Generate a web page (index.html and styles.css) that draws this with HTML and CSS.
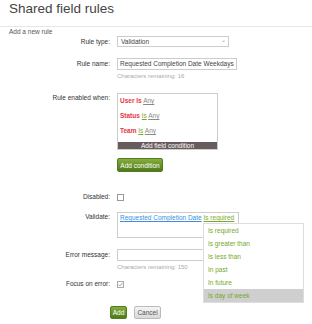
FILE: index.html
```html
<!DOCTYPE html>
<html lang="en">
<head>
  <meta charset="UTF-8">
  <title>Shared field rules</title>
  <link rel="stylesheet" href="styles.css">
</head>
<body>
  <div class="header"><h1>Shared field rules</h1></div>
  <div class="intro">Add a new rule</div>

  <div class="row r-type">
    <div class="label">Rule type:</div>
    <div class="select">Validation<span class="arrow">&#8964;</span></div>
  </div>

  <div class="row r-name">
    <div class="label">Rule name:</div>
    <div class="input">Requested Completion Date Weekdays</div>
  </div>
  <div class="hint">Characters remaining: 16</div>

  <div class="row r-when top">
    <div class="label">Rule enabled when:</div>
    <div class="cond-box">
      <div class="conds">
        <div class="cond"><b class="field">User Is</b> <u class="any">Any</u></div>
        <div class="cond"><b class="field">Status</b> <u class="op">Is</u> <u class="any">Any</u></div>
        <div class="cond"><b class="field">Team</b> <u class="op">Is</u> <u class="any">Any</u></div>
      </div>
      <div class="add-field">Add field condition</div>
    </div>
  </div>

  <div class="row r-addcond">
    <div class="label"></div>
    <button class="btn green">Add condition</button>
  </div>

  <div class="row r-disabled">
    <div class="label">Disabled:</div>
    <span class="check"></span>
  </div>

  <div class="row r-validate top">
    <div class="label">Validate:</div>
    <div class="validate-wrap">
      <div class="validate-box">
        <u class="link">Requested Completion Date</u> <u class="op">Is required</u>
      </div>
      <ul class="menu">
        <li>Is required</li>
        <li>Is greater than</li>
        <li>Is less than</li>
        <li>In past</li>
        <li>In future</li>
        <li class="active">Is day of week</li>
      </ul>
    </div>
  </div>

  <div class="row r-error">
    <div class="label">Error message:</div>
    <div class="input"></div>
  </div>
  <div class="hint">Characters remaining: 150</div>

  <div class="row r-focus">
    <div class="label">Focus on error:</div>
    <span class="check checked">
      <svg width="5" height="5" viewBox="0 0 5 5"><path d="M0.5 2.6 L1.9 4 L4.6 0.8" fill="none" stroke="#8a8a8a" stroke-width="0.8"/></svg>
    </span>
  </div>

  <div class="row r-buttons">
    <div class="label"></div>
    <button class="btn green">Add</button>
    <button class="btn grey">Cancel</button>
  </div>
</body>
</html>
```

FILE: styles.css
```css
body {
  margin: 0;
  font-family: "Liberation Sans", Arial, sans-serif;
  color: #333;
  background: #fff;
}
.header {
  height: 26px;
  border-bottom: 1px solid #e6e6e6;
}
h1 {
  margin: 0;
  padding: 1px 0 0 9px;
  font-size: 13.5px;
  font-weight: normal;
  line-height: 16px;
  color: #444;
}
.intro {
  margin: 1px 0 0 9px;
  font-size: 6.5px;
  line-height: 8px;
  color: #555;
}
.row {
  display: flex;
  align-items: center;
  gap: 7px;
  font-size: 6.5px;
}
.row.top {
  align-items: flex-start;
}
.label {
  width: 110px;
  flex: none;
  text-align: right;
  line-height: 8px;
  color: #333;
}
.row.top .label {
  padding-top: 1px;
}
.r-type { margin-top: 0; }
.r-name { margin-top: 11px; }
.r-when { margin-top: 13px; }
.r-addcond { margin-top: 8px; }
.r-disabled { margin-top: 21px; }
.r-validate { margin-top: 11px; }
.r-error { margin-top: 11px; }
.r-focus { margin-top: 9px; }
.r-buttons { margin-top: 18px; gap: 0; }

.select {
  box-sizing: border-box;
  width: 112px;
  height: 11px;
  border: 1px solid #ccc;
  padding-left: 3px;
  font-size: 6.5px;
  line-height: 9px;
  color: #444;
  display: flex;
  justify-content: space-between;
}
.arrow {
  color: #999;
  font-size: 6px;
  line-height: 6px;
  padding-right: 2px;
}
.input {
  box-sizing: border-box;
  width: 120px;
  height: 12px;
  border: 1px solid #ccc;
  padding-left: 2px;
  font-size: 6.5px;
  line-height: 10px;
  color: #444;
  white-space: nowrap;
  overflow: hidden;
}
.hint {
  margin: 2px 0 0 117px;
  font-size: 6px;
  line-height: 8px;
  color: #aaa;
}
.cond-box {
  box-sizing: border-box;
  width: 101px;
  height: 57px;
  border: 1px solid #ccc;
  display: flex;
  flex-direction: column;
  justify-content: space-between;
}
.conds {
  margin-top: -1px;
  padding-left: 2px;
}
.cond {
  line-height: 15px;
  height: 15px;
}
.field {
  color: #e8353f;
  font-weight: bold;
}
.any {
  color: #888;
}
.op {
  color: #7aaa2c;
}
.add-field {
  height: 7px;
  line-height: 7px;
  background: #675c5c;
  color: #fff;
  text-align: center;
  font-size: 6.5px;
}
.btn {
  font-family: "Liberation Sans", Arial, sans-serif;
  font-size: 6.5px;
  height: 14px;
  padding: 0 2px;
  border-radius: 2px;
  white-space: nowrap;
  cursor: pointer;
}
.btn.green {
  border: 1px solid #527d1e;
  background: linear-gradient(#86ad3e, #4d7a18);
  color: #fff;
}
.r-addcond .btn { width: 46px; }
.r-buttons .btn { height: 13px; }
.r-buttons .btn.green { width: 17px; padding: 0; }
.btn.grey {
  margin-left: 7px;
  width: 27px;
  padding: 0;
  border: 1px solid #bbb;
  background: linear-gradient(#f4f4f4, #d9d9d9);
  color: #555;
}
.check {
  box-sizing: border-box;
  width: 7px;
  height: 7px;
  border: 1px solid #999;
  background: #fff;
  display: flex;
  align-items: center;
  justify-content: center;
}
.check.checked {
  border-color: #aaa;
}
.validate-wrap {
  position: relative;
}
.validate-box {
  box-sizing: border-box;
  width: 122px;
  height: 26px;
  border: 1px solid #ccc;
  padding: 1px 0 0 2px;
  line-height: 8px;
  white-space: nowrap;
}
.link {
  color: #3a8fe0;
}
.menu {
  position: absolute;
  left: 86px;
  top: 11px;
  width: 101px;
  margin: 0;
  padding: 0;
  list-style: none;
  background: #fff;
  border: 1px solid #ddd;
  box-sizing: border-box;
}
.menu li {
  height: 13px;
  line-height: 13px;
  padding-left: 4px;
  color: #74a82a;
  font-size: 6.5px;
}
.menu li.active {
  background: #cfcfcf;
}
```
